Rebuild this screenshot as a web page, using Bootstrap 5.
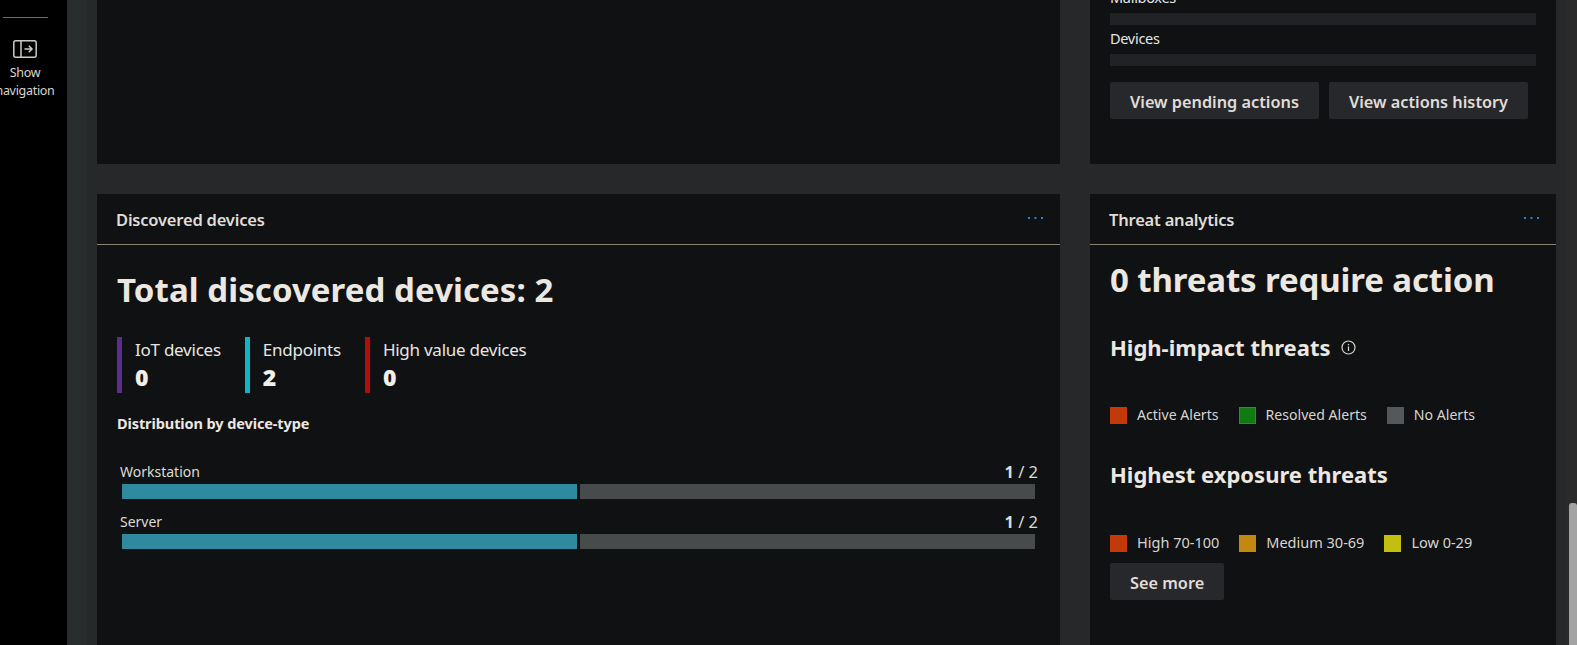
<!DOCTYPE html>
<html lang="en" data-bs-theme="dark">
<head>
  <meta charset="UTF-8" />
  <title>Microsoft Defender Home</title>
  <link href="https://cdn.jsdelivr.net/npm/bootstrap@5.3.0/dist/css/bootstrap.min.css" rel="stylesheet" />
  <style>
    html, body { height: 645px; overflow: hidden; }
    body {
      background: #27282a;
      color: #e8e6e3;
      font-family: "Noto Sans", "Open Sans", sans-serif;
      font-size: 14px;
    }
    .shell { height: 645px; }
    .side-rail { width: 67px; background: #000; padding-top: 17px; }
    .side-inner { width: 50px; }
    .side-rule { width: 45px; height: 1px; background: #6f6b64; margin-bottom: 22px; }
    .side-label { font-size: 12.5px; line-height: 18px; margin-top: 6px; white-space: nowrap; color: #d8d5d0; letter-spacing: -0.3px; }
    .gutter { width: 20px; background: #2a2d2e; }
    .content-area { width: 1479px; padding: 0 10px; }
    .tile { background: #0f1113; flex-shrink: 0; }
    .tile-wide { width: 963px; }
    .tile-narrow { width: 466px; margin-left: 30px; }
    .top-row { height: 164px; margin-bottom: 30px; }
    .bottom-row { height: 451px; }
    .top-tile { padding: 0 20px 45px; }
    .top-tile > * { flex-shrink: 0; }
    .metric-name { line-height: 20px; font-size: 14.5px; letter-spacing: -0.3px; }
    .empty-bar { height: 12px; background: #202225; margin: 6px 0 3px; }
    .action-row { gap: 10px; margin-top: 13px; }
    .flat-btn {
      background: #27282b;
      color: #e0ddd8;
      border: 0;
      border-radius: 2px;
      font-size: 16.3px;
      font-weight: 600;
      height: 37px;
      padding: 3px 20px 0;
    }
    .tile-head { height: 51px; border-bottom: 1px solid #8c8274; padding: 3px 17px 0 19px; }
    .tile-title { font-size: 16.5px; font-weight: 600; color: #e0ddd8; letter-spacing: -0.2px; }
    .more-dots { margin-top: -6px; }
    .big-num { font-size: 33px; font-weight: 700; color: #ece8e1; line-height: 44px; letter-spacing: 0.07px; }
    .big-num-tight { letter-spacing: -0.13px; }
    .devices-body { padding: 23px 20px 0 20px; }
    .stat-strip { margin-top: 25px; }
    .stat-item { border-left: 5px solid; padding-left: 13px; height: 56px; margin-right: 24px; }
    .stat-name { font-size: 17px; line-height: 22px; margin-top: 2px; margin-bottom: 1px; letter-spacing: -0.25px; }
    .stat-val { font-size: 23px; font-weight: 900; line-height: 30px; color: #f2efe9; }
    .sub-heading { font-size: 14.5px; font-weight: 700; margin-top: 20px; margin-bottom: 29px; color: #ece8e1; line-height: 20px; letter-spacing: -0.1px; }
    .dist-row { margin-left: 3px; width: 918px; margin-bottom: 13px; }
    .dist-text { font-size: 14px; line-height: 20px; color: #dedbd5; margin-bottom: 2px; }
    .dist-count { font-size: 16.5px; }
    .dist-bars { margin-left: 2px; width: 913px; height: 15px; gap: 3px; }
    .dist-done { background: #2f899f; }
    .dist-rest { background: #484b4c; }
    .threat-body { padding: 13px 20px 0 20px; }
    .threat-heading { font-size: 22px; font-weight: 700; color: #ece8e1; line-height: 30px; }
    .impact-heading { margin-top: 30px; }
    .exposure-heading { margin-top: 34px; }
    .info-mark { margin-left: 10px; }
    .key-row { margin-top: 43px; height: 20px; font-size: 14.1px; color: #d8d5d0; }
    .key-row-scale { font-size: 14.5px; margin-top: 44px; }
    .key-item { margin-right: 20px; }
    .swatch { width: 17px; height: 17px; margin-right: 10px; border: 1px solid; }
    .see-more { margin-top: 10px; }
    .page-scroll { width: 11px; padding-top: 503px; padding-left: 3px; background: #2a2a2b; }
    .page-thumb { height: 142px; background: #a3a3a3; border-radius: 3px 3px 0 0; }
  </style>
</head>
<body>
  <div class="shell d-flex">
    <div class="side-rail flex-shrink-0">
      <div class="side-inner d-flex flex-column align-items-center">
        <div class="side-rule"></div>
        <svg width="24" height="18" viewBox="0 0 24 18" fill="none" stroke="#cfcbc4" stroke-width="1.5">
          <rect x="0.8" y="0.8" width="22.4" height="16.4" rx="2"></rect>
          <path d="M8 1v16"></path>
          <path d="M11.5 9h7.5M15.8 5.8 19 9l-3.2 3.2"></path>
        </svg>
        <div class="side-label text-center">Show<br />navigation</div>
      </div>
    </div>
    <div class="gutter flex-shrink-0"></div>

    <div class="content-area flex-shrink-0">
      <div class="top-row d-flex">
        <div class="tile tile-wide"></div>
        <div class="tile tile-narrow top-tile d-flex flex-column justify-content-end">
          <div class="metric-name">Mailboxes</div>
          <div class="empty-bar"></div>
          <div class="metric-name">Devices</div>
          <div class="empty-bar"></div>
          <div class="action-row d-flex">
            <button class="btn flat-btn" type="button">View pending actions</button>
            <button class="btn flat-btn" type="button">View actions history</button>
          </div>
        </div>
      </div>

      <div class="bottom-row d-flex">
        <div class="tile tile-wide">
          <div class="tile-head d-flex align-items-center justify-content-between">
            <span class="tile-title">Discovered devices</span>
            <svg class="more-dots" width="15" height="2" viewBox="0 0 15 2" fill="#2f7fe0"><rect x="0" width="2" height="2"></rect><rect x="6.5" width="2" height="2"></rect><rect x="13" width="2" height="2"></rect></svg>
          </div>
          <div class="devices-body">
            <div class="big-num">Total discovered devices: 2</div>
            <div class="stat-strip d-flex">
              <div class="stat-item" style="border-color: #5c2d91">
                <div class="stat-name">IoT devices</div>
                <div class="stat-val">0</div>
              </div>
              <div class="stat-item" style="border-color: #0fb5c4">
                <div class="stat-name">Endpoints</div>
                <div class="stat-val">2</div>
              </div>
              <div class="stat-item" style="border-color: #b80c0c">
                <div class="stat-name">High value devices</div>
                <div class="stat-val">0</div>
              </div>
            </div>
            <div class="sub-heading">Distribution by device-type</div>
            <div class="dist-row">
              <div class="dist-text d-flex justify-content-between"><span>Workstation</span><span class="dist-count"><b>1</b> / 2</span></div>
              <div class="dist-bars d-flex"><div class="dist-done flex-fill"></div><div class="dist-rest flex-fill"></div></div>
            </div>
            <div class="dist-row">
              <div class="dist-text d-flex justify-content-between"><span>Server</span><span class="dist-count"><b>1</b> / 2</span></div>
              <div class="dist-bars d-flex"><div class="dist-done flex-fill"></div><div class="dist-rest flex-fill"></div></div>
            </div>
          </div>
        </div>

        <div class="tile tile-narrow">
          <div class="tile-head d-flex align-items-center justify-content-between">
            <span class="tile-title">Threat analytics</span>
            <svg class="more-dots" width="15" height="2" viewBox="0 0 15 2" fill="#2f7fe0"><rect x="0" width="2" height="2"></rect><rect x="6.5" width="2" height="2"></rect><rect x="13" width="2" height="2"></rect></svg>
          </div>
          <div class="threat-body">
            <div class="big-num big-num-tight">0 threats require action</div>
            <div class="threat-heading impact-heading d-flex align-items-center">High-impact threats
              <svg class="info-mark" width="15" height="15" viewBox="0 0 15 15" fill="none" stroke="#d8d5d0" stroke-width="1.2">
                <circle cx="7.5" cy="7.5" r="6.5"></circle>
                <path d="M7.5 6.5v4.5M7.5 4v1.3"></path>
              </svg>
            </div>
            <div class="key-row d-flex align-items-center">
              <div class="key-item d-flex align-items-center"><span class="swatch" style="background: #c23a0a; border-color: #c23a0a"></span>Active Alerts</div>
              <div class="key-item d-flex align-items-center"><span class="swatch" style="background: #0e7c0e; border-color: #13a10e"></span>Resolved Alerts</div>
              <div class="key-item d-flex align-items-center"><span class="swatch" style="background: #55585b; border-color: #55585b"></span>No Alerts</div>
            </div>
            <div class="threat-heading exposure-heading">Highest exposure threats</div>
            <div class="key-row key-row-scale d-flex align-items-center">
              <div class="key-item d-flex align-items-center"><span class="swatch" style="background: #c23a0a; border-color: #c23a0a"></span>High 70-100</div>
              <div class="key-item d-flex align-items-center"><span class="swatch" style="background: #c4880f; border-color: #c4880f"></span>Medium 30-69</div>
              <div class="key-item d-flex align-items-center"><span class="swatch" style="background: #c2c00f; border-color: #c2c00f"></span>Low 0-29</div>
            </div>
            <button class="btn flat-btn see-more" type="button">See more</button>
          </div>
        </div>
      </div>
    </div>

    <div class="page-scroll flex-shrink-0"><div class="page-thumb"></div></div>
  </div>
  <script src="https://cdn.jsdelivr.net/npm/bootstrap@5.3.0/dist/js/bootstrap.bundle.min.js"></script>
</body>
</html>
